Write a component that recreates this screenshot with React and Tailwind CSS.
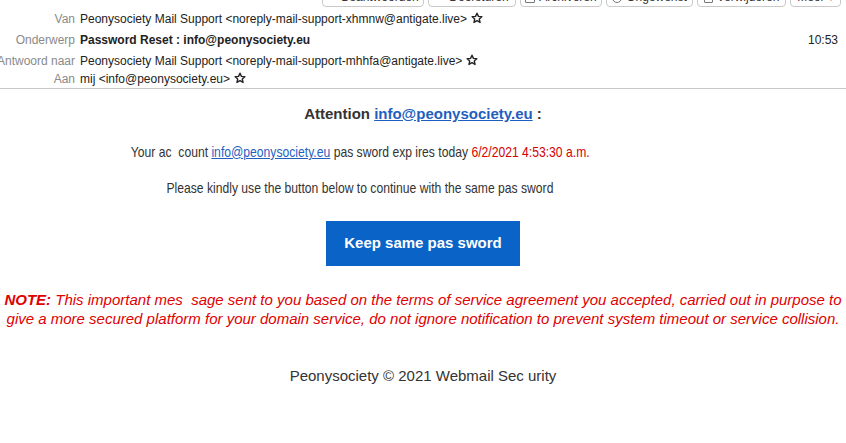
import React from "react";

function Star() {
  return (
    <svg width="12" height="12" viewBox="0 0 24 24" className="inline-block ml-[4px] -mt-[3px]" fill="none" stroke="#222" strokeWidth="2.8" strokeLinejoin="round">
      <path d="M12 2.5l2.9 6.3 6.8.7-5.1 4.6 1.5 6.8L12 17.4 5.9 20.9l1.5-6.8-5.1-4.6 6.8-.7z" />
    </svg>
  );
}

function ToolButton({ w, icon, label }) {
  return (
    <div className={`h-[22px] ${w} border border-[#c9c9c9] rounded-[4px] bg-white flex items-end justify-center gap-[4px] pb-[2px] text-[12px] leading-[14px] text-[#333]`}>
      {icon}
      <span>{label}</span>
    </div>
  );
}

export default function App() {
  const font = { fontFamily: '"Liberation Sans", Arial, sans-serif' };
  return (
    <div className="w-[846px] h-[443px] bg-white overflow-hidden" style={font}>
      {/* toolbar (cut off at top) */}
      <div className="-mt-[15px] h-[22px] flex justify-end gap-[4px] pr-[5px]">
        <ToolButton w="w-[102px]" label="Beantwoorden" icon={<span className="text-[#666]">↩</span>} />
        <ToolButton w="w-[88px]" label="Doorsturen" icon={<span className="text-[#666]">↪</span>} />
        <ToolButton w="w-[82px]" label="Archiveren" icon={<span className="inline-block w-[10px] h-[10px] border border-[#777] rounded-[1px] mb-[1px]" />} />
        <ToolButton w="w-[87px]" label="Ongewenst" icon={<span className="inline-block w-[10px] h-[10px] border border-[#777] rounded-full mb-[1px]" />} />
        <ToolButton w="w-[89px]" label="Verwijderen" icon={<span className="inline-block w-[9px] h-[10px] border border-[#777] rounded-[1px] mb-[1px]" />} />
        <ToolButton w="w-[51px]" label="Meer ▾" icon={null} />
      </div>

      {/* header rows */}
      <div className="mt-[1px] text-[12px] text-[#222]">
        <div className="h-[21px] flex items-center">
          <span className="w-[75px] text-right text-[#8a8a8a]">Van</span>
          <span className="ml-[5px]">Peonysociety Mail Support &lt;noreply-mail-support-xhmnw@antigate.live&gt;<Star /></span>
        </div>
        <div className="h-[22px] flex items-center">
          <span className="w-[75px] text-right text-[#8a8a8a]">Onderwerp</span>
          <span className="ml-[5px] font-bold">Password Reset : info@peonysociety.eu</span>
          <span className="ml-auto mr-[8px]">10:53</span>
        </div>
        <div className="h-[20px] flex items-center">
          <span className="w-[75px] text-right text-[#8a8a8a] whitespace-nowrap flex justify-end">Antwoord naar</span>
          <span className="ml-[5px]">Peonysociety Mail Support &lt;noreply-mail-support-mhhfa@antigate.live&gt;<Star /></span>
        </div>
        <div className="h-[16px] flex items-center">
          <span className="w-[75px] text-right text-[#8a8a8a]">Aan</span>
          <span className="ml-[5px]">mij &lt;info@peonysociety.eu&gt;<Star /></span>
        </div>
      </div>
      <div className="mt-[1px] border-t border-[#c8c8c8]" />

      {/* body */}
      <div className="text-[15px] text-[#333] text-center">
        <div className="mt-[15px] h-[20px] leading-[20px] font-bold">
          Attention <a className="text-[#1f5fbf] underline">info@peonysociety.eu</a> :
        </div>
        <div className="mt-[18px] h-[20px] leading-[20px] pr-[126px]">
          <span className="inline-block whitespace-pre scale-x-[0.81] origin-center">
            Your ac  count <a className="text-[#1f5fbf] underline">info@peonysociety.eu</a> pas sword exp ires today <span className="text-[#d40000]">6/2/2021 4:53:30 a.m.</span>
          </span>
        </div>
        <div className="mt-[16px] h-[20px] leading-[20px] pr-[126px]">
          <span className="inline-block whitespace-pre scale-x-[0.81] origin-center">
            Please kindly use the button below to continue with the same pas sword
          </span>
        </div>
        <div className="mt-[23px] flex justify-center">
          <div className="w-[194px] h-[45px] bg-[#0a64c8] text-white font-bold flex items-center justify-center">
            Keep same pas sword
          </div>
        </div>
        <div className="mt-[24px] text-[15px] leading-[19px] italic text-[#e00000] whitespace-pre">
          <span className="font-bold">NOTE:</span> This important mes  sage sent to you based on the terms of service agreement you accepted, carried out in purpose to{"\n"}give a more secured platform for your domain service, do not ignore notification to prevent system timeout or service collision.
        </div>
        <div className="mt-[38px] h-[20px] leading-[20px]">
          Peonysociety © 2021 Webmail Sec urity
        </div>
      </div>
    </div>
  );
}
